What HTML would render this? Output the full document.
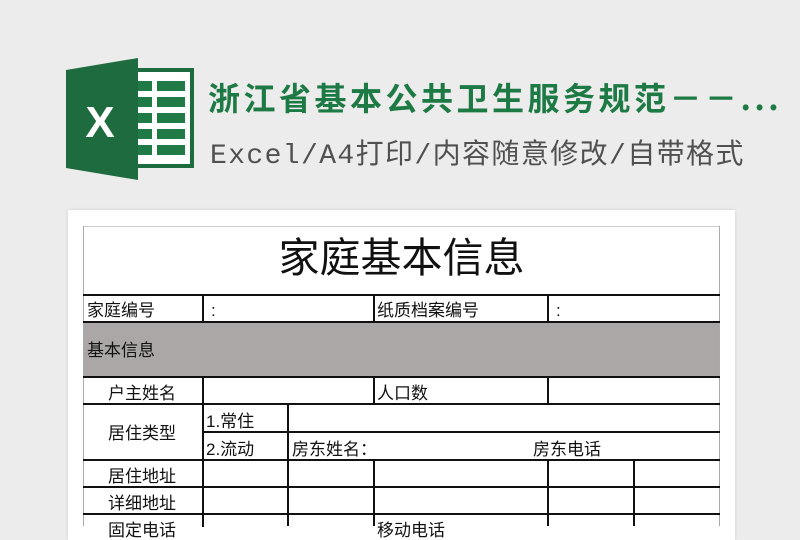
<!DOCTYPE html>
<html><head><meta charset="utf-8"><style>
body{margin:0;width:800px;height:526px;background:#ececec;position:relative;overflow:hidden;font-family:"Liberation Sans","Noto Sans CJK SC",sans-serif}
.t{position:absolute;left:208px;top:74px;font-size:32px;font-weight:bold;color:#1e7a45;letter-spacing:3.5px;white-space:nowrap;width:572px;overflow:hidden;font-family:"Noto Sans CJK SC",sans-serif}
.s{position:absolute;left:210px;top:132px;font-size:28px;color:#505050;letter-spacing:1.4px;white-space:nowrap;font-family:"Liberation Mono","Noto Sans CJK SC",monospace}
.card{position:absolute;left:68px;top:210px;width:667px;height:330px;background:#fff;box-shadow:0 0 3px #ccc}
.c{position:absolute;box-sizing:border-box;font-size:17px;color:#111;line-height:1;white-space:nowrap}
.h{position:absolute;background:#111;height:2px}
.v{position:absolute;background:#111;width:2px}
</style></head><body>
<svg style="position:absolute;left:66px;top:58px" width="128" height="122" viewBox="0 0 128 122">
<rect x="50" y="12" width="76" height="96" fill="#fff" stroke="#1d6b3e" stroke-width="4"/>
<rect x="50" y="14" width="20" height="92" fill="#c9d6cd"/>
<g fill="#1f7a45">
<rect x="58" y="23" width="28" height="10"/><rect x="91" y="23" width="28" height="10"/>
<rect x="58" y="39" width="28" height="10"/><rect x="91" y="39" width="28" height="10"/>
<rect x="58" y="55" width="28" height="10"/><rect x="91" y="55" width="28" height="10"/>
<rect x="58" y="71" width="28" height="10"/><rect x="91" y="71" width="28" height="10"/>
<rect x="58" y="87" width="28" height="10"/><rect x="91" y="87" width="28" height="10"/>
</g>
<polygon points="0,12 72,0 72,122 0,110" fill="#1d6b3e"/>
<text x="34" y="79" font-family="Liberation Sans" font-weight="bold" font-size="44" fill="#fff" text-anchor="middle">X</text>
</svg>
<div class="t">浙江省基本公共卫生服务规范－－...</div>
<div class="s">Excel/A4打印/内容随意修改/自带格式</div>
<div class="card"></div>
<div class="c" style="left:83px;top:323px;width:637px;height:54px;background:#aaa7a6"></div>
<div class="c" style="left:83px;top:238px;width:637px;text-align:center;font-size:41px">家庭基本信息</div>
<div class="h" style="left:83px;top:226px;width:637px;height:1px;background:#ccc"></div>
<div class="v" style="left:83px;top:226px;height:300px;width:1px;background:#aaa"></div>
<div class="v" style="left:719px;top:226px;height:300px;width:1px;background:#aaa"></div>
<div class="h" style="left:83px;top:294px;width:637px"></div>
<div class="h" style="left:83px;top:321px;width:637px"></div>
<div class="h" style="left:83px;top:376px;width:637px"></div>
<div class="h" style="left:83px;top:403px;width:637px"></div>
<div class="h" style="left:203px;top:431px;width:517px"></div>
<div class="h" style="left:83px;top:459px;width:637px"></div>
<div class="h" style="left:83px;top:486px;width:637px"></div>
<div class="h" style="left:83px;top:513px;width:637px"></div>
<div class="v" style="left:202px;top:295px;height:27px"></div>
<div class="v" style="left:373px;top:295px;height:27px"></div>
<div class="v" style="left:547px;top:295px;height:27px"></div>
<div class="v" style="left:202px;top:377px;height:150px"></div>
<div class="v" style="left:373px;top:377px;height:27px"></div>
<div class="v" style="left:547px;top:377px;height:27px"></div>
<div class="v" style="left:287px;top:404px;height:122px"></div>
<div class="v" style="left:373px;top:460px;height:66px"></div>
<div class="v" style="left:547px;top:460px;height:66px"></div>
<div class="v" style="left:633px;top:460px;height:66px"></div>
<div class="c" style="left:87px;top:302px">家庭编号</div>
<div class="c" style="left:211px;top:302px">:</div>
<div class="c" style="left:377px;top:302px">纸质档案编号</div>
<div class="c" style="left:556px;top:302px">:</div>
<div class="c" style="left:87px;top:342px">基本信息</div>
<div class="c" style="left:108px;top:385px">户主姓名</div>
<div class="c" style="left:377px;top:385px">人口数</div>
<div class="c" style="left:108px;top:425px">居住类型</div>
<div class="c" style="left:206px;top:413px">1.常住</div>
<div class="c" style="left:206px;top:441px">2.流动</div>
<div class="c" style="left:292px;top:441px">房东姓名：</div>
<div class="c" style="left:533px;top:441px">房东电话</div>
<div class="c" style="left:108px;top:468px">居住地址</div>
<div class="c" style="left:108px;top:495px">详细地址</div>
<div class="c" style="left:108px;top:522px">固定电话</div>
<div class="c" style="left:377px;top:522px">移动电话</div>
</body></html>
